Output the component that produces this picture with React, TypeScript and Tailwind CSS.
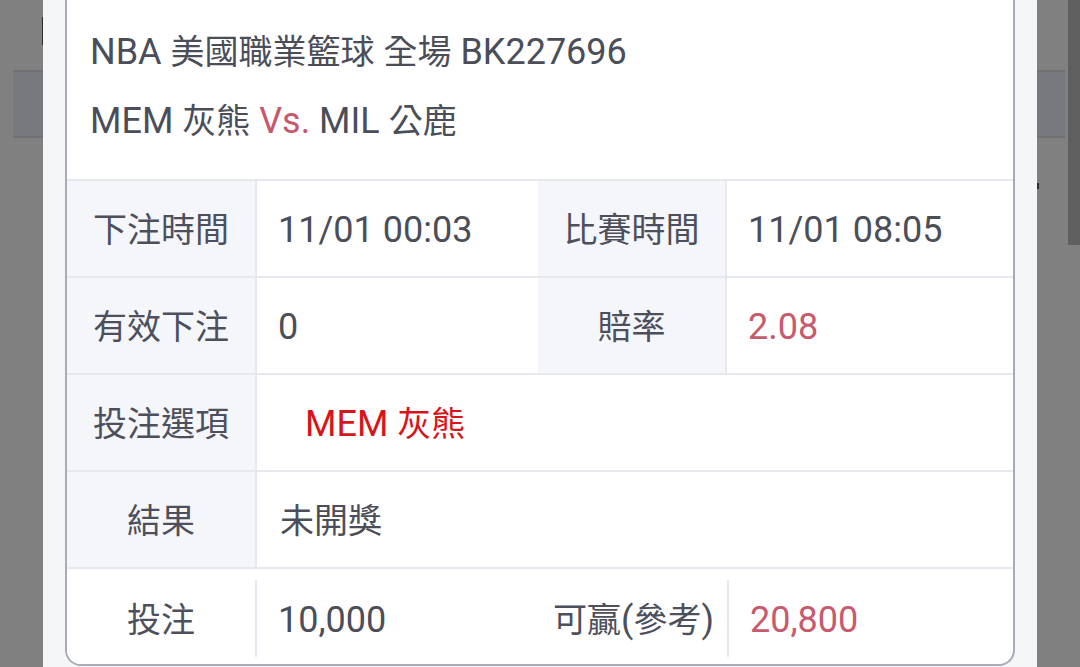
import React from 'react';

const font = "font-['Roboto','Noto_Sans_CJK_TC',sans-serif]";

// CJK glyphs sit a touch smaller than the Latin text in the reference
const C: React.FC<{ children: React.ReactNode }> = ({ children }) => <span className="text-[34px]">{children}</span>;

const Label: React.FC<{ children: React.ReactNode; plain?: boolean; w: string }> = ({ children, plain, w }) => (
  <div className={`${w} flex shrink-0 items-center justify-center pt-[3px] ${plain ? 'bg-white' : 'bg-[#f5f6fa]'} text-[#4d505c]`}>
    {children}
  </div>
);

const App: React.FC = () => {
  return (
    <div className={`relative flex h-[667px] w-[1080px] overflow-hidden bg-[#808080] ${font}`}>
      {/* dimmed page behind, left */}
      <div className="w-[43px] shrink-0 pt-[70px] pl-[13px]">
        <div className="h-[68px] border-y-2 border-[#707174] bg-[#77797e]"></div>
      </div>
      <div className="absolute left-[42px] top-[17px] h-[28px] w-[1px] bg-[#2e2e30]"></div>

      {/* modal */}
      <div className="w-[994px] shrink-0 bg-[#f5f6f8] px-[22px]">
        <div className="h-[666px] overflow-hidden rounded-b-[16px] border-2 border-t-0 border-[#a8aab7] bg-white text-[36px] text-[#4b4e58]">
          <div className="px-[23px] pt-[18px] pb-[23px]">
            <div className="leading-[69px]">
              NBA <C>美國職業籃球</C> <C>全場</C> BK227696
            </div>
            <div className="leading-[69px]">
              MEM <C>灰熊</C> <span className="text-[#c8586b]">Vs.</span> MIL <C>公鹿</C>
            </div>
          </div>

          <div className="flex h-[97px] border-t-2 border-[#e6e7ef]">
            <Label w="w-[188px]"><C>下注時間</C></Label>
            <div className="flex w-[283px] shrink-0 items-center border-l-2 border-[#e6e7ef] pt-[3px] pl-[21px]">11/01 00:03</div>
            <Label w="w-[187px]"><C>比賽時間</C></Label>
            <div className="flex flex-1 items-center border-l-2 border-[#e6e7ef] pt-[3px] pl-[21px]">11/01 08:05</div>
          </div>

          <div className="flex h-[97px] border-t-2 border-[#e6e7ef]">
            <Label w="w-[188px]"><C>有效下注</C></Label>
            <div className="flex w-[283px] shrink-0 items-center border-l-2 border-[#e6e7ef] pt-[3px] pl-[21px]">0</div>
            <Label w="w-[187px]"><C>賠率</C></Label>
            <div className="flex flex-1 items-center border-l-2 border-[#e6e7ef] pt-[3px] pl-[21px] text-[#c75a6c]">2.08</div>
          </div>

          <div className="flex h-[97px] border-t-2 border-[#e6e7ef]">
            <Label w="w-[188px]"><C>投注選項</C></Label>
            <div className="flex flex-1 items-center border-l-2 border-[#e6e7ef] pt-[3px] pl-[48px] text-[#d7141a]">
              <span>MEM <C>灰熊</C></span>
            </div>
          </div>

          <div className="flex h-[97px] border-t-2 border-[#e6e7ef]">
            <Label w="w-[188px]"><C>結果</C></Label>
            <div className="flex flex-1 items-center border-l-2 border-[#e6e7ef] pt-[3px] pl-[23px]"><C>未開獎</C></div>
          </div>

          <div className="flex h-[98px] border-t-2 border-[#e6e7ef] pt-[3px]">
            <Label plain w="w-[188px]"><C>投注</C></Label>
            <div className="my-auto h-[77px] w-[2px] shrink-0 bg-[#e6e7ef]"></div>
            <div className="flex w-[283px] shrink-0 items-center pt-[3px] pl-[21px]">10,000</div>
            <Label plain w="w-[187px]">
              <span><C>可贏</C>(<C>參考</C>)</span>
            </Label>
            <div className="my-auto h-[77px] w-[2px] shrink-0 bg-[#e6e7ef]"></div>
            <div className="flex flex-1 items-center pt-[3px] pl-[21px] text-[#c75a6c]">20,800</div>
          </div>
        </div>
      </div>

      {/* dimmed page behind, right */}
      <div className="w-[31px] shrink-0 pt-[70px] pr-[3px]">
        <div className="h-[68px] border-y-2 border-[#707174] bg-[#77797e]"></div>
      </div>
      <div className="absolute left-[1037px] top-[183px] h-[6px] w-[2px] bg-[#2e2e30]"></div>

      {/* scrollbar */}
      <div className="flex-1">
        <div className="h-[245px] bg-[#5f5f5f]"></div>
      </div>
    </div>
  );
};

export default App;
